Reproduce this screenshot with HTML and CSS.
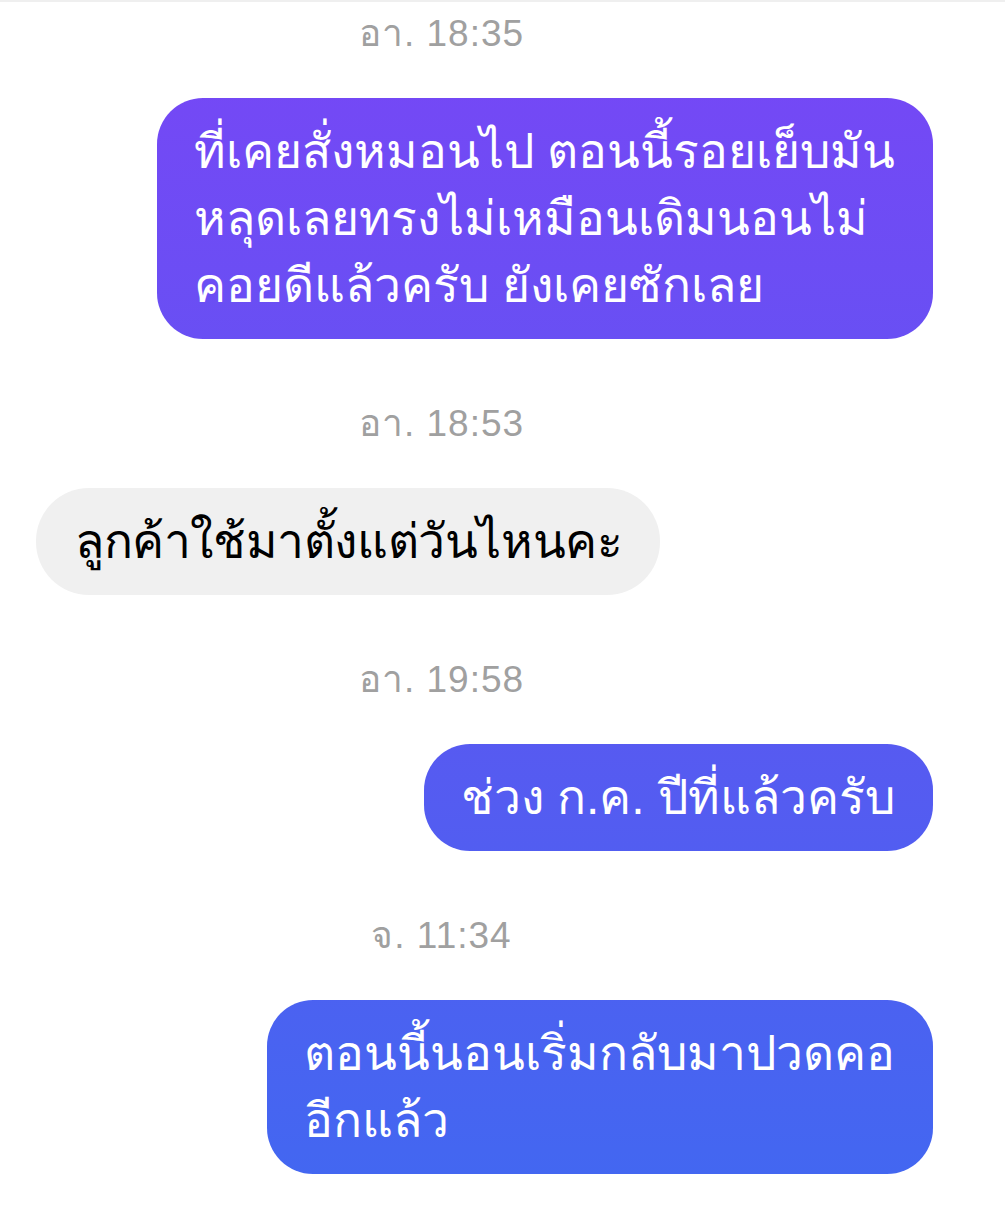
FILE: index.html
```html
<!DOCTYPE html>
<html lang="th">
<head>
    <meta charset="UTF-8">
    <meta name="viewport" content="width=device-width, initial-scale=1.0">
    <title>แชท</title>
    <link rel="stylesheet" href="styles.css">
</head>
<body>

    <main class="thread">
        <div class="stamp">อา. 18:35</div>
        <div class="row row-out">
            <div class="bubble bubble-out">ที่เคยสั่งหมอนไป ตอนนี้รอยเย็บมัน<br>หลุดเลยทรงไม่เหมือนเดิมนอนไม่<br>คอยดีแล้วครับ ยังเคยซักเลย</div>
        </div>

        <div class="stamp">อา. 18:53</div>
        <div class="row row-in">
            <div class="bubble bubble-in">ลูกค้าใช้มาตั้งแต่วันไหนคะ</div>
        </div>

        <div class="stamp">อา. 19:58</div>
        <div class="row row-out">
            <div class="bubble bubble-out">ช่วง ก.ค. ปีที่แล้วครับ</div>
        </div>

        <div class="stamp">จ. 11:34</div>
        <div class="row row-out">
            <div class="bubble bubble-out">ตอนนี้นอนเริ่มกลับมาปวดคอ<br>อีกแล้ว</div>
        </div>
    </main>

</body>
</html>
```

FILE: styles.css
```css
body {
    margin: 0;
    padding: 0;
    background-color: #fff;
    font-family: "Liberation Sans", "Noto Sans", sans-serif;
    border-top: 2px solid #efefef;
}

.thread {
    padding: 12px 0 0;
}

.stamp {
    text-align: center;
    padding-right: 122px;
    font-size: 37px;
    letter-spacing: 1px;
    line-height: 40px;
    color: #a0a0a0;
    margin-bottom: 44px;
}

.row {
    display: flex;
    margin-bottom: 65px;
}

.row-out {
    justify-content: flex-end;
    padding-right: 72px;
}

.row-in {
    justify-content: flex-start;
    padding-left: 36px;
}

.bubble {
    font-size: 48px;
    line-height: 67px;
    padding: 20px 38px 20px 37px;
    border-radius: 53px;
    white-space: nowrap;
}

.bubble-out {
    color: #fff;
    background: linear-gradient(to bottom, #7846f6 0%, #5a58f1 55%, #4168f1 100%) fixed;
    border-radius: 46px;
}

.bubble-in {
    color: #000;
    background-color: #f0f0f0;
    padding-left: 39px;
    letter-spacing: -0.4px;
}
```
